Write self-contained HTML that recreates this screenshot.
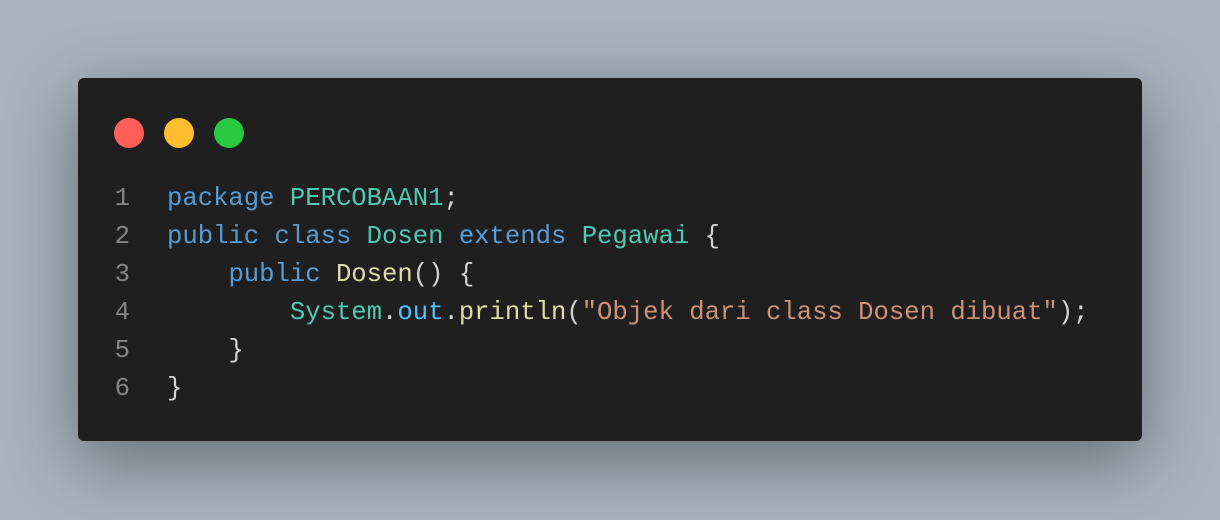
<!DOCTYPE html>
<html><head><meta charset="utf-8"><style>
html,body{margin:0;padding:0}
body{width:1220px;height:520px;background:#a8b3be;position:relative;overflow:hidden}
.win{position:absolute;left:78px;top:78px;width:1064px;height:363px;background:#1f1f1f;border-radius:6px;box-shadow:0 20px 70px rgba(0,0,0,0.4)}
.dot{position:absolute;top:40px;width:30px;height:30px;border-radius:50%}
.code{position:absolute;left:0;top:102px;font-family:"Liberation Mono",monospace;font-size:25.6px;line-height:38px;color:#d4d4d4;white-space:pre}
.ln{display:inline-block;width:52px;text-align:right;color:#858585;margin-right:37px}
.k{color:#569cd6}.t{color:#4ec9b0}.f{color:#dcdcaa}.s{color:#ce9178}.v{color:#4fc1ff}
</style></head><body>
<div class="win">
<div class="dot" style="left:36px;background:#ff5f57"></div>
<div class="dot" style="left:86px;background:#febc2e"></div>
<div class="dot" style="left:136px;background:#28c840"></div>
<div class="code"><span class="ln">1</span><span class="k">package</span> <span class="t">PERCOBAAN1</span>;
<span class="ln">2</span><span class="k">public</span> <span class="k">class</span> <span class="t">Dosen</span> <span class="k">extends</span> <span class="t">Pegawai</span> {
<span class="ln">3</span>    <span class="k">public</span> <span class="f">Dosen</span>() {
<span class="ln">4</span>        <span class="t">System</span>.<span class="v">out</span>.<span class="f">println</span>(<span class="s">"Objek dari class Dosen dibuat"</span>);
<span class="ln">5</span>    }
<span class="ln">6</span>}</div>
</div>
</body></html>
